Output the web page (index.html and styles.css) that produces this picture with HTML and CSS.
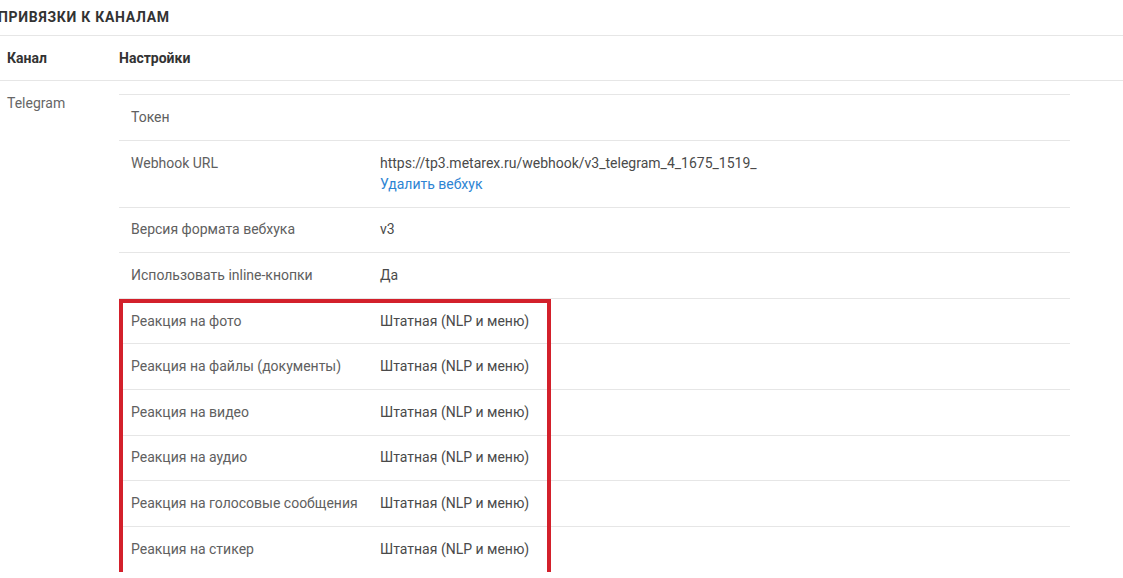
FILE: index.html
```html
<!DOCTYPE html>
<html lang="ru">
<head>
<meta charset="utf-8">
<link rel="stylesheet" href="styles.css">
</head>
<body>
<div class="page">
  <h2 class="section-title">Привязки к каналам</h2>
  <div class="table">
    <div class="thead">
      <div class="th col-channel">Канал</div>
      <div class="th col-settings">Настройки</div>
    </div>
    <div class="tbody">
      <div class="td col-channel channel-name">Telegram</div>
      <div class="td col-settings">
        <div class="settings">
          <div class="srow"><div class="skey">Токен</div><div class="sval"></div></div>
          <div class="srow tall"><div class="skey">Webhook URL</div><div class="sval">https://tp3.metarex.ru/webhook/v3_telegram_4_1675_1519_<br><a class="link" href="#">Удалить вебхук</a></div></div>
          <div class="srow"><div class="skey">Версия формата вебхука</div><div class="sval">v3</div></div>
          <div class="srow"><div class="skey">Использовать inline-кнопки</div><div class="sval">Да</div></div>
          <div class="highlight">
            <div class="srow"><div class="skey">Реакция на фото</div><div class="sval">Штатная (NLP и меню)</div></div>
            <div class="srow"><div class="skey">Реакция на файлы (документы)</div><div class="sval">Штатная (NLP и меню)</div></div>
            <div class="srow"><div class="skey">Реакция на видео</div><div class="sval">Штатная (NLP и меню)</div></div>
            <div class="srow"><div class="skey">Реакция на аудио</div><div class="sval">Штатная (NLP и меню)</div></div>
            <div class="srow"><div class="skey">Реакция на голосовые сообщения</div><div class="sval">Штатная (NLP и меню)</div></div>
            <div class="srow last"><div class="skey">Реакция на стикер</div><div class="sval">Штатная (NLP и меню)</div></div>
          </div>
        </div>
      </div>
    </div>
  </div>
</div>
</body>
</html>
```
FILE: styles.css
```css
* { box-sizing: border-box; }
html, body { margin: 0; padding: 0; background: #fff; }
body {
  font-family: Roboto, "Liberation Sans", Arial, sans-serif;
  font-size: 14px;
  color: #555;
  overflow: hidden;
}
.page { width: 1123px; }
.section-title {
  margin: 0 0 0 -2px;
  height: 36px;
  line-height: 34px;
  font-size: 14px;
  font-weight: 700;
  text-transform: uppercase;
  letter-spacing: 0.7px;
  color: #333;
  border-bottom: 1px solid #e6e6e6;
}
.table { display: flex; flex-direction: column; }
.thead {
  display: flex;
  height: 45px;
  align-items: center;
  border-bottom: 1px solid #e6e6e6;
}
.th { font-weight: 700; color: #333; }
.col-channel { width: 119px; flex: none; padding-left: 7px; }
.col-settings { width: 951px; flex: none; }
.tbody { display: flex; align-items: flex-start; }
.channel-name { padding-top: 13px; color: #666; line-height: 19px; }
.td.col-settings { padding-top: 13px; }
.settings { border-top: 1px solid #e6e6e6; }
.srow {
  display: grid;
  grid-template-columns: 261px 1fr;
  height: 45.6px;
  align-items: center;
  border-bottom: 1px solid #e6e6e6;
  line-height: 21px;
}
.srow.tall { height: 67px; align-items: start; padding-top: 12px; }
.srow.last { border-bottom: none; }
.skey { padding-left: 12px; color: #606060; }
.sval { color: #4a4a4a; }
.link { color: #2d84d3; text-decoration: none; }
.highlight { position: relative; }
.highlight::after {
  content: "";
  position: absolute;
  left: 0;
  top: 0;
  width: 424px;
  height: 273px;
  border: 4px solid #d3202b;
  pointer-events: none;
}
```
